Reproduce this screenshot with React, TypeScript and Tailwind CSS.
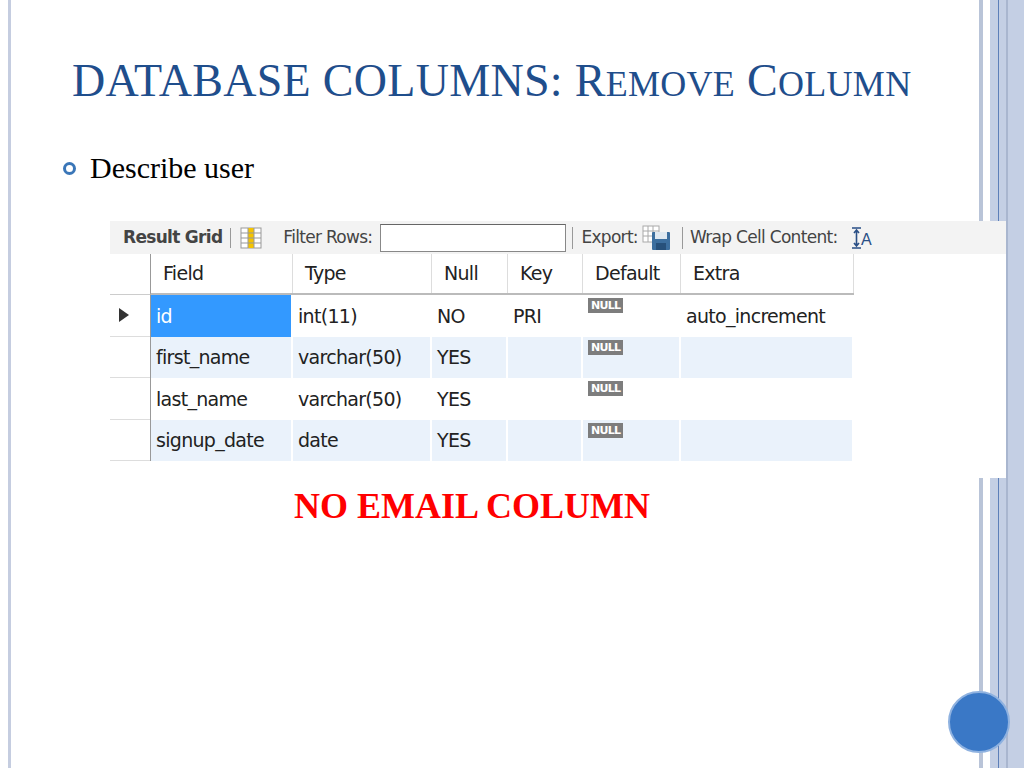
import React from 'react';

const cols = [
    { label: 'Field', w: 'w-[142px]' },
    { label: 'Type', w: 'w-[139px]' },
    { label: 'Null', w: 'w-[76px]' },
    { label: 'Key', w: 'w-[75px]' },
    { label: 'Default', w: 'w-[98px]' },
    { label: 'Extra', w: 'w-[173px]' },
];

const rows = [
    ['id', 'int(11)', 'NO', 'PRI', null, 'auto_increment'],
    ['first_name', 'varchar(50)', 'YES', '', null, ''],
    ['last_name', 'varchar(50)', 'YES', '', null, ''],
    ['signup_date', 'date', 'YES', '', null, ''],
];

const NullTag = () => (
    <span className="inline-block bg-[#7d7d7d] text-white text-[11px] font-bold leading-none px-[3px] py-[2px] mt-[3px]">NULL</span>
);

const GridIcon = () => (
    <svg width="24" height="24" viewBox="0 0 24 24">
        <rect x="2" y="2" width="20" height="20" fill="#fff" stroke="#999" />
        <rect x="9" y="2" width="6" height="20" fill="#f5c400" />
        <path d="M2 7h20M2 12h20M2 17h20M9 2v20M15 2v20" stroke="#999" strokeWidth="1" />
    </svg>
);

const ExportIcon = () => (
    <svg width="32" height="26" viewBox="0 0 32 26">
        <rect x="1" y="1" width="16" height="16" fill="#fff" stroke="#aaa" />
        <path d="M1 6h16M1 11h16M6 1v16M11 1v16" stroke="#aaa" />
        <rect x="10" y="7" width="18" height="18" rx="1" fill="#3c6e9e" />
        <rect x="13" y="7" width="12" height="7" fill="#dfe8f0" />
        <rect x="14" y="18" width="10" height="7" fill="#27507a" />
    </svg>
);

const WrapIcon = () => (
    <svg width="22" height="24" viewBox="0 0 22 24">
        <path d="M1 2h9M1 22h9M5.5 4v16M3 7l2.5-3 2.5 3M3 17l2.5 3 2.5-3" stroke="#2a4f86" strokeWidth="1.6" fill="none" />
        <text x="10" y="19" fontSize="16" fill="#2a4f86" fontFamily="Liberation Sans, sans-serif">A</text>
    </svg>
);

const App = () => {
    return (
        <div className="w-[1024px] h-[768px] bg-white relative overflow-hidden flex" style={{ fontFamily: '"Liberation Serif", serif' }}>
            {/* left stripe */}
            <div className="w-[8px] shrink-0" />
            <div className="w-[3px] shrink-0 bg-[#c5cde0]" />

            <main className="flex-1 min-w-0 flex flex-col">
                <h1 className="mt-[58px] ml-[61px] text-[#1f4e8c] text-[46px] leading-none tracking-[0.3px] whitespace-nowrap">
                    DATABASE COLUMNS: R<span className="text-[36px]">EMOVE</span> C<span className="text-[36px]">OLUMN</span>
                </h1>

                <div className="mt-[49px] ml-[52px] flex items-center gap-[14px]">
                    <span className="w-[13px] h-[13px] rounded-full border-[3px] border-[#3a76b8]" />
                    <span className="text-[30px] text-black leading-none">Describe user</span>
                </div>

                {/* workbench screenshot */}
                <div className="relative z-10 mt-[38px] ml-[99px] w-[896px] h-[257px] shrink-0 bg-white" style={{ fontFamily: '"DejaVu Sans", sans-serif' }}>
                    <div className="h-[33px] bg-[#f3f3f3] flex items-center text-[17px] text-[#333] tracking-[-0.7px] whitespace-nowrap">
                        <span className="ml-[13px] font-bold text-[#444]">Result Grid</span>
                        <span className="mx-[8px] h-[20px] border-l border-[#999]" />
                        <GridIcon />
                        <span className="ml-[20px] text-[#444]">Filter Rows:</span>
                        <span className="ml-[8px] w-[186px] h-[28px] bg-white border border-[#888] border-t-[#666]" />
                        <span className="ml-[6px] h-[22px] border-l border-[#999]" />
                        <span className="ml-[8px] text-[#444]">Export:</span>
                        <span className="ml-[4px]"><ExportIcon /></span>
                        <span className="ml-[8px] h-[22px] border-l border-[#999]" />
                        <span className="ml-[7px] text-[#444]">Wrap Cell Content:</span>
                        <span className="ml-[14px]"><WrapIcon /></span>
                    </div>
                    <div className="flex h-[41px] text-[19px] text-[#222] tracking-[-0.7px]">
                        <div className="w-[40px] border-b border-[#ccc]" />
                        <div className="flex border-l border-[#999] border-b-2 border-b-[#bbb] bg-white">
                            {cols.map(c => (
                                <div key={c.label} className={`${c.w} border-r border-[#ddd] pl-[12px] flex items-center`}>{c.label}</div>
                            ))}
                        </div>
                    </div>
                    {rows.map((r, i) => (
                        <div key={i} className="flex h-[41.5px] text-[19px] text-[#222] tracking-[-0.7px]">
                            <div className="w-[40px] border-b border-[#ddd] flex items-center pl-[8px]">
                                {i === 0 && <svg width="12" height="16" viewBox="0 0 12 16"><path d="M1 1l10 7-10 7z" fill="#333" /></svg>}
                            </div>
                            <div className={`flex border-l border-[#999] ${i % 2 === 1 ? 'bg-[#eaf2fb]' : 'bg-white'}`}>
                                {r.map((cell, j) => (
                                    <div
                                        key={j}
                                        className={`${cols[j].w} border-r-2 border-white flex pl-[5px] ${cell === null ? 'items-start' : 'items-center'} ${i === 0 && j === 0 ? 'bg-[#3399ff] text-white' : ''}`}
                                    >
                                        {cell === null ? <NullTag /> : cell}
                                    </div>
                                ))}
                            </div>
                        </div>
                    ))}
                </div>

                <p className="mt-[10px] ml-[283px] text-[#ff0000] font-bold text-[36px] leading-none whitespace-nowrap">NO EMAIL COLUMN</p>
            </main>

            {/* right stripes */}
            <div className="w-[4px] shrink-0 bg-[#b9c4d8]" />
            <div className="w-[7px] shrink-0 bg-white" />
            <div className="w-[8px] shrink-0 bg-[#c4cfe4]" />
            <div className="w-[1px] shrink-0 bg-[#5d7fb8]" />
            <div className="w-[7px] shrink-0 bg-[#c4cfe4]" />
            <div className="w-[2px] shrink-0 bg-[#a9b6cf]" />
            <div className="w-[16px] shrink-0 bg-[#c4cfe4]" />

            <div className="absolute left-[948px] top-[691px] w-[62px] h-[62px] rounded-full bg-[#3a78c6] border-2 border-[#8fb2e0]" />
        </div>
    );
};

export default App;
